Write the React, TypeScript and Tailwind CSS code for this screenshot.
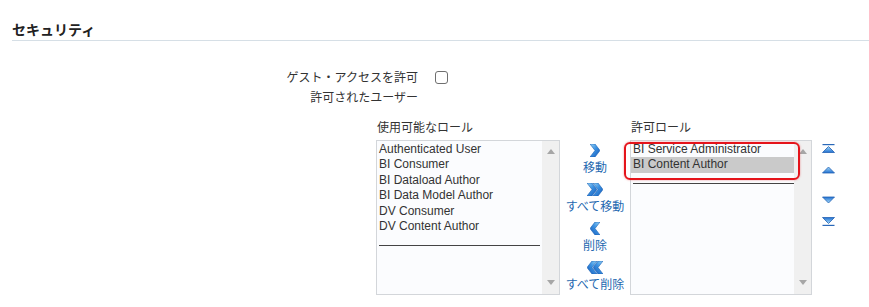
import { FC } from "react";

const availableRoles = [
    "Authenticated User",
    "BI Consumer",
    "BI Dataload Author",
    "BI Data Model Author",
    "DV Consumer",
    "DV Content Author",
];

const ScrollArrow: FC<{ up?: boolean }> = ({ up }) => (
    <svg width="8" height="5" viewBox="0 0 8 5">
        <polygon points={up ? "0,5 4,0 8,5" : "0,0 8,0 4,5"} fill="#a6a6a6" />
    </svg>
);

const Separator: FC = () => (
    <div className="h-[15.4px] flex items-end pb-[4px] pl-[2px]">
        <div className="h-px w-[161px] bg-[#444]" />
    </div>
);

const ListBox: FC<{ children: React.ReactNode }> = ({ children }) => (
    <div className="mt-[5px] h-[155px] flex border border-[#d3d6da] bg-[#fbfcfe]">
        <div className="flex-1 pt-[1px] text-[12px] leading-[15.4px] text-[#333] font-['Liberation_Sans',sans-serif]">{children}</div>
        <div className="w-[17px] bg-[#f0f0f0] flex flex-col items-center justify-between pt-[8px] pb-[9px]">
            <ScrollArrow up />
            <ScrollArrow />
        </div>
    </div>
);

const Chevron: FC<{ id: string; left?: boolean; double?: boolean }> = ({ id, left, double }) => {
    const w = double ? 16 : 10;
    const shape = (dx: number) =>
        `${dx},0 ${dx + 5},0 ${dx + 10},6.5 ${dx + 5},13 ${dx},13 ${dx + 5},6.5`;
    return (
        <svg width={w} height="13" viewBox={`0 0 ${w} 13`} className={left ? "-scale-x-100" : ""}>
            <defs>
                <linearGradient id={id} x1="0" y1="0" x2="1" y2="1">
                    <stop offset="0" stopColor="#9ad6f8" />
                    <stop offset="0.45" stopColor="#3b92e2" />
                    <stop offset="1" stopColor="#1457b6" />
                </linearGradient>
            </defs>
            <polygon points={shape(0)} fill={`url(#${id})`} stroke="#1b5fb4" strokeWidth="0.6" />
            {double && <polygon points={shape(6)} fill={`url(#${id})`} stroke="#1b5fb4" strokeWidth="0.6" />}
        </svg>
    );
};

const MoveButton: FC<{ id: string; label: string; left?: boolean; double?: boolean; first?: boolean }> = ({
    id,
    label,
    left,
    double,
    first,
}) => (
    <div className={`flex flex-col items-center ${first ? "" : "mt-[5px]"}`}>
        <div className="h-[18px] flex items-center justify-center">
            <Chevron id={id} left={left} double={double} />
        </div>
        <div className="h-[16px] leading-[16px] text-[12px] text-[#2468b0] whitespace-nowrap">{label}</div>
    </div>
);

const OrderIcon: FC<{ id: string; up?: boolean; bar?: boolean }> = ({ id, up, bar }) => (
    <svg width="13" height="9" viewBox="0 0 13 9">
        <defs>
            <linearGradient id={id} x1="0" y1={up ? "1" : "0"} x2="0" y2={up ? "0" : "1"}>
                <stop offset="0" stopColor="#1f6fd0" />
                <stop offset="1" stopColor="#a8dcfa" />
            </linearGradient>
        </defs>
        {up ? (
            <>
                {bar && <rect x="0.5" y="0" width="12" height="1.2" fill="#2a68b8" />}
                <polygon points={bar ? "0.5,8.5 6.5,2.5 12.5,8.5" : "0.5,7 6.5,1 12.5,7"} fill={`url(#${id})`} stroke="#2462b4" strokeWidth="0.8" />
            </>
        ) : (
            <>
                <polygon points={bar ? "0.5,0.5 6.5,6.5 12.5,0.5" : "0.5,1 6.5,7 12.5,1"} fill={`url(#${id})`} stroke="#2462b4" strokeWidth="0.8" />
                {bar && <rect x="0.5" y="7.8" width="12" height="1.2" fill="#2a68b8" />}
            </>
        )}
    </svg>
);

export default function App() {
    return (
        <div className="w-[869px] h-[307px] overflow-hidden bg-white text-[#333] font-['Liberation_Sans','Noto_Sans_CJK_JP',sans-serif]">
            <div className="ml-[12px] pt-[20px] pb-[2px] border-b border-[#d6dfe6] text-[14px] leading-[18px] font-bold text-[#222] font-['Noto_Sans_CJK_JP',sans-serif]">
                セキュリティ
            </div>

            <div className="mt-[26px] text-[12px] font-['Noto_Sans_CJK_JP',sans-serif]">
                <div className="h-[20px] flex items-center">
                    <div className="w-[418px] text-right leading-[20px]">ゲスト・アクセスを許可</div>
                    <div className="ml-[17px] w-[13px] h-[13px] rounded-[3px] border border-[#6f6f6f] bg-white" />
                </div>
                <div className="h-[20px] flex items-center">
                    <div className="w-[418px] text-right leading-[20px]">許可されたユーザー</div>
                </div>
            </div>

            <div className="ml-[376px] mt-[12px] flex text-[12px] font-['Noto_Sans_CJK_JP',sans-serif]">
                <div className="w-[184px]">
                    <div className="h-[16px] leading-[16px] pl-[1px]">使用可能なロール</div>
                    <ListBox>
                        {availableRoles.map((role) => (
                            <div key={role} className="h-[15.4px] pl-[2px] whitespace-nowrap">
                                {role}
                            </div>
                        ))}
                        <Separator />
                    </ListBox>
                </div>

                <div className="w-[70px] pt-[22px] flex flex-col items-center">
                    <MoveButton id="g1" label="移動" first />
                    <MoveButton id="g2" label="すべて移動" double />
                    <MoveButton id="g3" label="削除" left />
                    <MoveButton id="g4" label="すべて削除" left double />
                </div>

                <div className="w-[182px] relative">
                    <div className="h-[16px] leading-[16px] pl-[1px]">許可ロール</div>
                    <div className="relative">
                        <ListBox>
                            <div className="h-[15.4px] pl-[2px] whitespace-nowrap">BI Service Administrator</div>
                            <div className="h-[15.4px] pl-[2px] whitespace-nowrap bg-[#cacaca]">BI Content Author</div>
                            <Separator />
                        </ListBox>
                        <div className="absolute -left-[6px] top-[2px] w-[176px] h-[38px] rounded-[6px] border-2 border-[#e5141b] shadow-[0_0_2px_rgba(229,20,27,0.5)]" />
                    </div>
                </div>

                <div className="ml-[10px] pt-[25px] flex flex-col">
                    <OrderIcon id="o1" up bar />
                    <div className="mt-[13px]">
                        <OrderIcon id="o2" up />
                    </div>
                    <div className="mt-[21px]">
                        <OrderIcon id="o3" />
                    </div>
                    <div className="mt-[12px]">
                        <OrderIcon id="o4" bar />
                    </div>
                </div>
            </div>
        </div>
    );
}
